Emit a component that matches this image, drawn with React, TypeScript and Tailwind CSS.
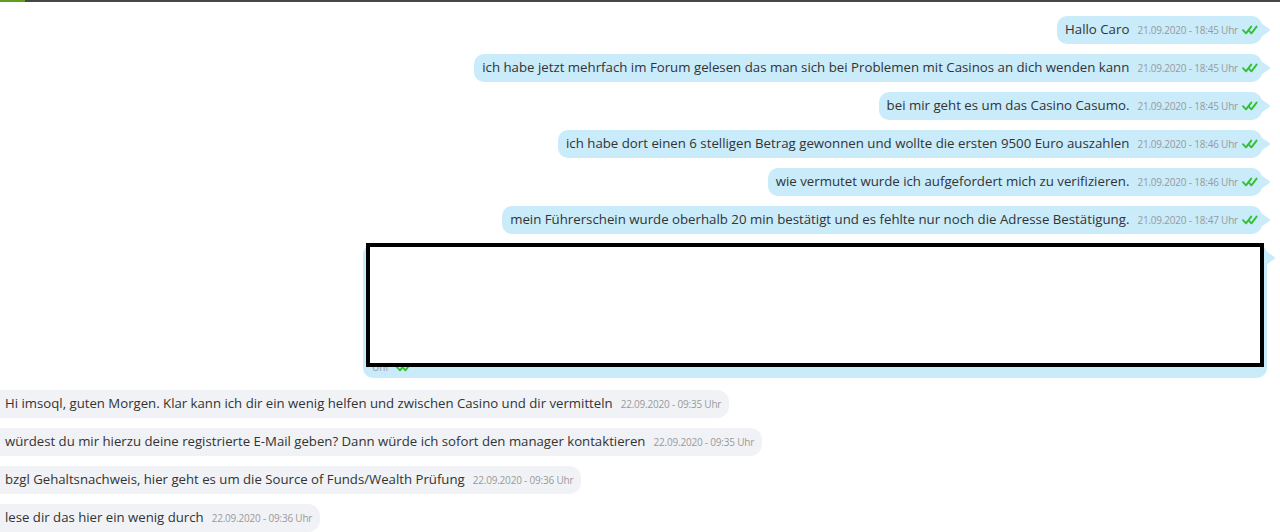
import React from "react";

const Checks = () => (
  <svg width="16" height="10" viewBox="0 0 16 10" className="shrink-0">
    <path d="M1 5.2 L4 8.3 L9.2 1.6" fill="none" stroke="#33c033" strokeWidth="1.9" strokeLinecap="round" strokeLinejoin="round" />
    <path d="M6.8 5.6 L9.4 8.3 L14.6 1.6" fill="none" stroke="#33c033" strokeWidth="1.9" strokeLinecap="round" strokeLinejoin="round" />
  </svg>
);

const Tail = () => (
  <svg width="10" height="14" viewBox="0 0 10 14" className="absolute -right-[9px] top-[7px]">
    <path d="M0 0 L8.5 6 Q9.6 7 8.5 8 L0 14 Z" fill="#c9ebfa" />
  </svg>
);

const Time = ({ t }: { t: string }) => (
  <span className="text-[10px] text-[#9a9a9a] ml-2 whitespace-nowrap tracking-[-0.2px]">{t}</span>
);

const Out = ({ text, t }: { text: string; t: string }) => (
  <div className="relative h-[28px] rounded-[10px] bg-[#c9ebfa] pl-2 pr-[4px] flex items-center text-[13.25px] text-[#333] whitespace-nowrap">
    <span>{text}</span>
    <Time t={t} />
    <span className="ml-[4px]"><Checks /></span>
    <Tail />
  </div>
);

const In = ({ text, t }: { text: string; t: string }) => (
  <div className="h-[28px] rounded-r-[12px] bg-[#f0f2f6] pl-[5px] pr-[8px] flex items-center text-[13.2px] text-[#333] whitespace-nowrap self-start">
    <span>{text}</span>
    <Time t={t} />
  </div>
);

export default function App() {
  const outs = [
    ["Hallo Caro", "21.09.2020 - 18:45 Uhr"],
    ["ich habe jetzt mehrfach im Forum gelesen das man sich bei Problemen mit Casinos an dich wenden kann", "21.09.2020 - 18:45 Uhr"],
    ["bei mir geht es um das Casino Casumo.", "21.09.2020 - 18:45 Uhr"],
    ["ich habe dort einen 6 stelligen Betrag gewonnen und wollte die ersten 9500 Euro auszahlen", "21.09.2020 - 18:46 Uhr"],
    ["wie vermutet wurde ich aufgefordert mich zu verifizieren.", "21.09.2020 - 18:46 Uhr"],
    ["mein Führerschein wurde oberhalb 20 min bestätigt und es fehlte nur noch die Adresse Bestätigung.", "21.09.2020 - 18:47 Uhr"],
  ];
  const ins = [
    ["Hi imsoql, guten Morgen. Klar kann ich dir ein wenig helfen und zwischen Casino und dir vermitteln", "22.09.2020 - 09:35 Uhr"],
    ["würdest du mir hierzu deine registrierte E-Mail geben? Dann würde ich sofort den manager kontaktieren", "22.09.2020 - 09:35 Uhr"],
    ["bzgl Gehaltsnachweis, hier geht es um die Source of Funds/Wealth Prüfung", "22.09.2020 - 09:36 Uhr"],
    ["lese dir das hier ein wenig durch", "22.09.2020 - 09:36 Uhr"],
  ];
  return (
    <div className="w-[1280px] h-[532px] overflow-hidden bg-white font-['Open_Sans',sans-serif]">
      <div className="h-[2px] bg-[#474747] flex">
        <div className="w-[25px] bg-[#5f9e1c]" />
      </div>
      <div className="flex flex-col items-end gap-[10px] pt-[14px] pr-[18px]">
        {outs.map(([a, b], i) => (
          <Out key={i} text={a} t={b} />
        ))}
        <div className="relative w-[904px] h-[134px] rounded-[10px] bg-[#c9ebfa] -mr-[5px]">
          <Tail />
          <div className="absolute left-[9px] bottom-[6px] flex items-end gap-[6px] leading-[10px]">
            <span className="text-[10px] text-[#9a9a9a]">Uhr</span>
            <Checks />
          </div>
          <div className="absolute left-[3px] right-[3px] -top-[1px] bottom-[11px] border-[4px] border-black bg-white" />
        </div>
      </div>
      <div className="flex flex-col gap-[10px] pt-[12px]">
        {ins.map(([a, b], i) => (
          <In key={i} text={a} t={b} />
        ))}
      </div>
    </div>
  );
}
